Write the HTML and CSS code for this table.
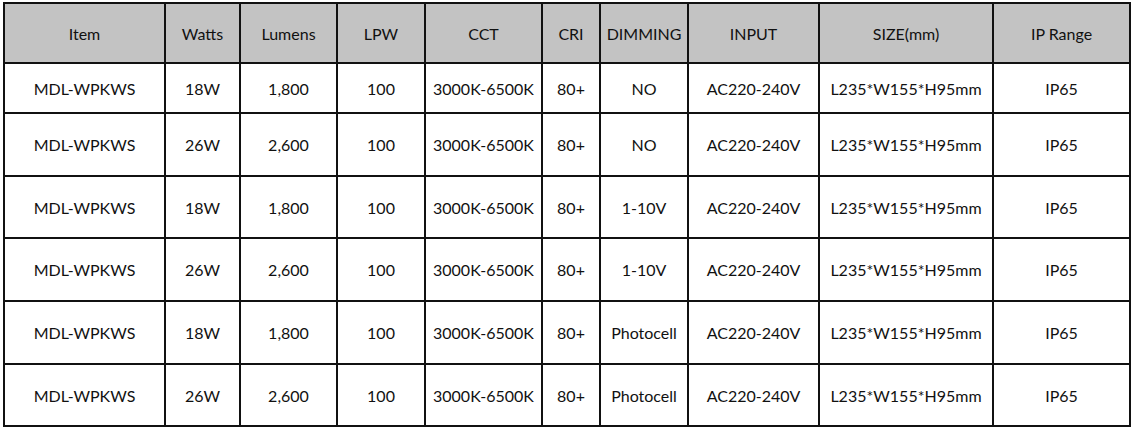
FILE: index.html
```html
<!DOCTYPE html>
<html>
<head>
<meta charset="utf-8">
<link rel="stylesheet" href="styles.css">
</head>
<body>
<table class="spec">
  <colgroup>
    <col class="c-item"><col class="c-watts"><col class="c-lumens"><col class="c-lpw"><col class="c-cct"><col class="c-cri"><col class="c-dim"><col class="c-input"><col class="c-size"><col class="c-ip">
  </colgroup>
  <thead>
    <tr class="head">
      <th>Item</th><th>Watts</th><th>Lumens</th><th>LPW</th><th>CCT</th><th>CRI</th><th>DIMMING</th><th>INPUT</th><th>SIZE(mm)</th><th>IP Range</th>
    </tr>
  </thead>
  <tbody>
    <tr class="r1">
      <td>MDL-WPKWS</td><td>18W</td><td>1,800</td><td>100</td><td>3000K-6500K</td><td>80+</td><td>NO</td><td>AC220-240V</td><td>L235*W155*H95mm</td><td>IP65</td>
    </tr>
    <tr class="r2">
      <td>MDL-WPKWS</td><td>26W</td><td>2,600</td><td>100</td><td>3000K-6500K</td><td>80+</td><td>NO</td><td>AC220-240V</td><td>L235*W155*H95mm</td><td>IP65</td>
    </tr>
    <tr class="r3">
      <td>MDL-WPKWS</td><td>18W</td><td>1,800</td><td>100</td><td>3000K-6500K</td><td>80+</td><td>1-10V</td><td>AC220-240V</td><td>L235*W155*H95mm</td><td>IP65</td>
    </tr>
    <tr class="r4">
      <td>MDL-WPKWS</td><td>26W</td><td>2,600</td><td>100</td><td>3000K-6500K</td><td>80+</td><td>1-10V</td><td>AC220-240V</td><td>L235*W155*H95mm</td><td>IP65</td>
    </tr>
    <tr class="r5">
      <td>MDL-WPKWS</td><td>18W</td><td>1,800</td><td>100</td><td>3000K-6500K</td><td>80+</td><td>Photocell</td><td>AC220-240V</td><td>L235*W155*H95mm</td><td>IP65</td>
    </tr>
    <tr class="r6">
      <td>MDL-WPKWS</td><td>26W</td><td>2,600</td><td>100</td><td>3000K-6500K</td><td>80+</td><td>Photocell</td><td>AC220-240V</td><td>L235*W155*H95mm</td><td>IP65</td>
    </tr>
  </tbody>
</table>
</body>
</html>
```
FILE: styles.css
```css
html, body {
  margin: 0;
  padding: 0;
  background: #ffffff;
}
body {
  padding: 2px 0 0 3px;
  font-family: Lato, "Liberation Sans", sans-serif;
  color: #111111;
}
.spec {
  border-collapse: collapse;
  table-layout: fixed;
  width: 1128px;
  font-size: 16px;
}
.spec th, .spec td {
  border: 2px solid #111111;
  text-align: center;
  vertical-align: middle;
  padding: 0;
  font-weight: normal;
  white-space: nowrap;
}
.head th {
  background: #c3c3c3;
}
.c-item { width: 161px; }
.c-watts { width: 75px; }
.c-lumens { width: 97px; }
.c-lpw { width: 88px; }
.c-cct { width: 117px; }
.c-cri { width: 58px; }
.c-dim { width: 88px; }
.c-input { width: 131px; }
.c-size { width: 174px; }
.c-ip { width: 137px; }
.head { height: 60px; }
.r1 { height: 50px; }
.r2 { height: 63px; }
.r3 { height: 62px; }
.r4 { height: 63px; }
.r5 { height: 63px; }
.r6 { height: 62px; }
```
